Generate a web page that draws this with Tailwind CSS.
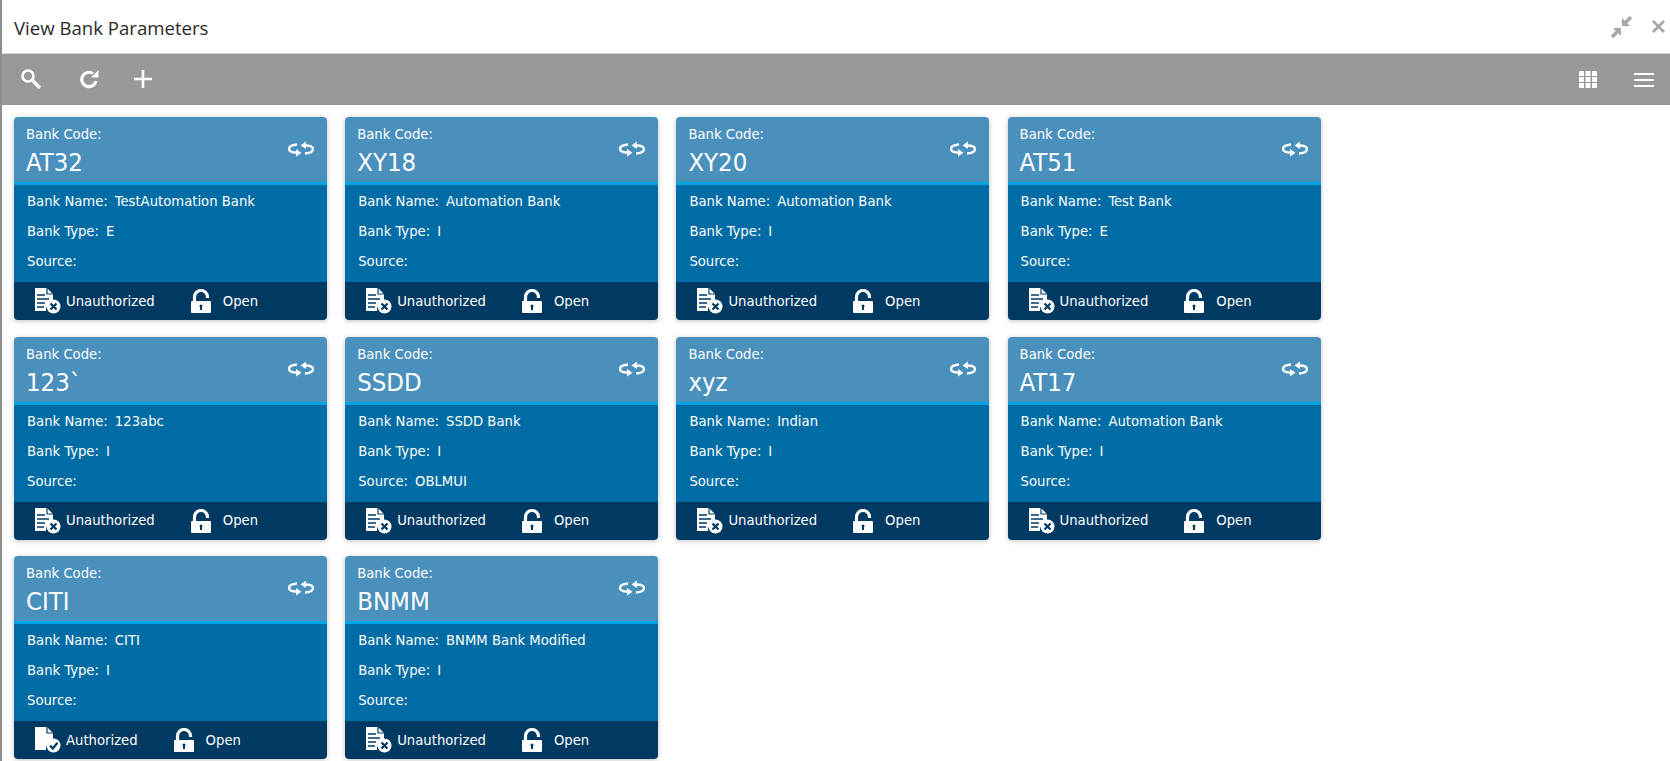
<!DOCTYPE html>
<html lang="en">
<head>
    <meta charset="UTF-8">
    <meta name="viewport" content="width=device-width, initial-scale=1.0">
    <title>View Bank Parameters</title>
    <script src="https://cdn.jsdelivr.net/npm/@tailwindcss/browser@4"></script>
</head>
<body class="bg-white h-[761px] overflow-hidden font-['Open_Sans','Noto_Sans',sans-serif]">
    <svg class="hidden">
        <symbol id="swap" viewBox="0 0 28 16">
            <path d="M10 3.500 C4 4 2 6 2 8 C2 10 5 11.500 10 11.500" fill="none" stroke="white" stroke-width="2.400"/>
            <path d="M9 8 L14.500 11.800 L9 15.500 Z" fill="white"/>
            <path d="M18 4.500 C23 4.500 26 6 26 8 C26 10 24 12 18 12.500" fill="none" stroke="white" stroke-width="2.400"/>
            <path d="M19 .5 L13.500 4.500 L19 8 Z" fill="white"/>
        </symbol>
        <symbol id="doc" viewBox="0 0 27 26">
            <path d="M1 0 H13 L19 6 V14 A8 8 0 0 0 12 23 H1 Z" fill="white"/>
            <path d="M13 0 V6 H19" fill="none" stroke="#003a63" stroke-width="1.200"/>
            <path d="M3 7 H11 M3 11 H15 M3 15 H11 M3 19 H10" stroke="#003a63" stroke-width="1.500"/>
            <circle cx="19.500" cy="18.500" r="7" fill="white"/>
            <path d="M16.500 15.500 L22.500 21.500 M22.500 15.500 L16.500 21.500" stroke="#003a63" stroke-width="2.200"/>
        </symbol>
        <symbol id="doc-ok" viewBox="0 0 27 26">
            <path d="M1 0 H13 L19 6 V14 A8 8 0 0 0 12 23 H1 Z" fill="white"/>
            <path d="M13 0 V6 H19" fill="none" stroke="#003a63" stroke-width="1.200"/>
            <circle cx="19.500" cy="18.500" r="7" fill="white"/>
            <path d="M16 18.500 L18.800 21.500 L23.500 15.800" fill="none" stroke="#003a63" stroke-width="2.200"/>
        </symbol>
        <symbol id="lock" viewBox="0 0 22 24">
            <path d="M4.500 13 V8 A6.500 6.500 0 0 1 17.500 8 V9" fill="none" stroke="white" stroke-width="3.200"/>
            <rect x="1" y="12" width="20" height="12" rx="1" fill="white"/>
            <rect x="10" y="16" width="2" height="5" fill="#003a63"/>
            <circle cx="11" cy="17" r="1.500" fill="#003a63"/>
        </symbol>
    </svg>

    <div class="h-full border-l-2 border-[#8f8f8f]">
        <!-- Title bar -->
        <div class="h-[54px] flex items-center justify-between pl-3 pr-[5px] pt-[2px] border-b border-[#d8d8d8]">
            <h1 class="text-[18.600px] text-[#2b2b2b] font-normal">View Bank Parameters</h1>
            <div class="flex items-center gap-[19px] -mt-[2px]">
                <svg class="w-[22px] h-[22px]" viewBox="0 0 22 22" fill="#a8a8a8" stroke="#a8a8a8">
                    <path d="M11 2 V10 H19 Z" stroke="none"/>
                    <path d="M14 7 L20 1" stroke-width="3.500"/>
                    <path d="M10 12 H2 L10 20 Z" stroke="none"/>
                    <path d="M7 15 L1 21" stroke-width="3.500"/>
                </svg>
                <svg class="w-[13px] h-[13px]" viewBox="0 0 13 13" stroke="#a8a8a8" stroke-width="2.800">
                    <path d="M1 1 L12 12 M12 1 L1 12"/>
                </svg>
            </div>
        </div>

        <!-- Toolbar -->
        <div class="h-[51px] bg-[#999999] flex items-center justify-between pl-[18px] pr-[15px]">
            <div class="flex items-center -mt-[2px]">
                <svg class="w-[22px] h-[22px]" viewBox="0 0 22 22" fill="none" stroke="white">
                    <circle cx="8" cy="8" r="5.500" stroke-width="2.600"/>
                    <path d="M12 12 L20 20" stroke-width="3.400"/>
                </svg>
                <svg class="w-[20px] h-[20px] ml-[37px]" viewBox="0 0 20 20" fill="none">
                    <path d="M17 12 A7.200 7.200 0 1 1 14 4.500" stroke="white" stroke-width="3.200"/>
                    <path d="M12 8.500 H19.500 V1 Z" fill="white"/>
                </svg>
                <svg class="w-[20px] h-[20px] ml-[34px]" viewBox="0 0 20 20" stroke="white" stroke-width="2.600">
                    <path d="M10 1 V19 M1 10 H19"/>
                </svg>
            </div>
            <div class="flex items-center gap-[37px]">
                <svg class="w-[18px] h-[17px]" viewBox="0 0 18 17" fill="white">
                    <rect width="5" height="5"/><rect x="6.500" width="5" height="5"/><rect x="13" width="5" height="5"/>
                    <rect y="6" width="5" height="5"/><rect x="6.500" y="6" width="5" height="5"/><rect x="13" y="6" width="5" height="5"/>
                    <rect y="12" width="5" height="5"/><rect x="6.500" y="12" width="5" height="5"/><rect x="13" y="12" width="5" height="5"/>
                </svg>
                <svg class="w-[20px] h-[14px] mr-[1px]" viewBox="0 0 20 14" fill="white">
                    <rect width="20" height="2"/><rect y="6" width="20" height="2"/><rect y="12" width="20" height="2"/>
                </svg>
            </div>
        </div>

        <!-- Cards -->
        <div id="cards" class="grid grid-cols-[repeat(4,313px)] gap-x-[18.200px] gap-y-[16.500px] pl-3 pt-[12px] font-['DejaVu_Sans',sans-serif] [font-stretch:condensed]"></div>
    </div>

    <template id="card">
        <div class="h-[203px] rounded-[4px] overflow-hidden flex flex-col text-white shadow-[0_1px_5px_rgba(0,0,0,0.25)]">
            <div class="h-[68px] bg-[#4a90bd] border-b-[3px] border-[#00a5e3] pl-3 pr-[12px] flex items-center justify-between">
                <div class="self-start pt-[7px]">
                    <div class="text-[14.700px] leading-[20px]">Bank Code:</div>
                    <div data-code class="text-[25.500px] leading-[34px] mt-[1px]"></div>
                </div>
                <svg class="w-[28px] h-[16px] -mt-[1px]"><use href="#swap"/></svg>
            </div>
            <div class="flex-1 bg-[#006ca5] pl-[13px] pt-[1px] text-[14.700px]">
                <div class="h-[30.500px] flex items-center gap-[7px]"><span>Bank Name:</span><span data-name></span></div>
                <div class="h-[30px] flex items-center gap-[7px]"><span>Bank Type:</span><span data-type></span></div>
                <div class="h-[30px] flex items-center gap-[7px]"><span>Source:</span><span data-source></span></div>
            </div>
            <div class="h-[38px] bg-[#003a63] pl-[20px] flex items-center text-[14.700px]">
                <svg data-icon class="w-[27px] h-[26px] shrink-0"><use href="#doc"/></svg>
                <span data-status class="ml-[5px]"></span>
                <svg class="w-[22px] h-[24px] ml-[35px] shrink-0"><use href="#lock"/></svg>
                <span class="ml-[11px]">Open</span>
            </div>
        </div>
    </template>

    <script>
        const banks = [
            ['AT32', 'TestAutomation Bank', 'E', '', 'Unauthorized'],
            ['XY18', 'Automation Bank', 'I', '', 'Unauthorized'],
            ['XY20', 'Automation Bank', 'I', '', 'Unauthorized'],
            ['AT51', 'Test Bank', 'E', '', 'Unauthorized'],
            ['123`', '123abc', 'I', '', 'Unauthorized'],
            ['SSDD', 'SSDD Bank', 'I', 'OBLMUI', 'Unauthorized'],
            ['xyz', 'Indian', 'I', '', 'Unauthorized'],
            ['AT17', 'Automation Bank', 'I', '', 'Unauthorized'],
            ['CITI', 'CITI', 'I', '', 'Authorized'],
            ['BNMM', 'BNMM Bank Modified', 'I', '', 'Unauthorized'],
        ];
        const cards = document.getElementById('cards');
        const tpl = document.getElementById('card');

        banks.forEach(([code, name, type, source, status]) => {
            const el = tpl.content.cloneNode(true);
            el.querySelector('[data-code]').textContent = code;
            el.querySelector('[data-name]').textContent = name;
            el.querySelector('[data-type]').textContent = type;
            el.querySelector('[data-source]').textContent = source;
            el.querySelector('[data-status]').textContent = status;
            if (status === 'Authorized') {
                el.querySelector('[data-icon] use').setAttribute('href', '#doc-ok');
            }
            cards.appendChild(el);
        });
    </script>
</body>
</html>
